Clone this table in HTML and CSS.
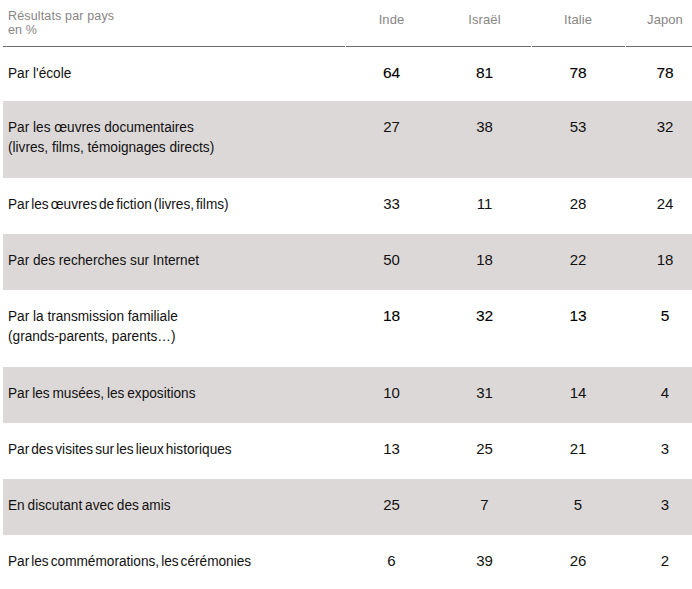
FILE: index.html
```html
<!DOCTYPE html>
<html lang="fr">
<head>
<meta charset="utf-8">
<title>Résultats par pays</title>
<link rel="stylesheet" href="styles.css">
</head>
<body>
<div class="table">
  <div class="row head">
    <div class="cell label hcap">Résultats par pays<br>en %</div>
    <div class="cell num hcol gap">Inde</div>
    <div class="cell num hcol">Israël</div>
    <div class="cell num hcol gap">Italie</div>
    <div class="cell num hcol gap">Japon</div>
  </div>
  <div class="row r1">
    <div class="cell label"><span class="t">Par l'école</span></div>
    <div class="cell num strong">64</div>
    <div class="cell num strong">81</div>
    <div class="cell num strong">78</div>
    <div class="cell num strong">78</div>
  </div>
  <div class="row shade double">
    <div class="cell label"><span class="t">Par les œuvres documentaires<br>(livres, films, témoignages directs)</span></div>
    <div class="cell num">27</div>
    <div class="cell num">38</div>
    <div class="cell num">53</div>
    <div class="cell num">32</div>
  </div>
  <div class="row">
    <div class="cell label tight"><span class="t">Par les œuvres de fiction (livres, films)</span></div>
    <div class="cell num">33</div>
    <div class="cell num">11</div>
    <div class="cell num">28</div>
    <div class="cell num">24</div>
  </div>
  <div class="row shade">
    <div class="cell label"><span class="t">Par des recherches sur Internet</span></div>
    <div class="cell num">50</div>
    <div class="cell num">18</div>
    <div class="cell num">22</div>
    <div class="cell num">18</div>
  </div>
  <div class="row double">
    <div class="cell label"><span class="t">Par la transmission familiale<br>(grands-parents, parents…)</span></div>
    <div class="cell num strong">18</div>
    <div class="cell num strong">32</div>
    <div class="cell num strong">13</div>
    <div class="cell num strong">5</div>
  </div>
  <div class="row shade">
    <div class="cell label semi"><span class="t">Par les musées, les expositions</span></div>
    <div class="cell num">10</div>
    <div class="cell num">31</div>
    <div class="cell num">14</div>
    <div class="cell num">4</div>
  </div>
  <div class="row">
    <div class="cell label tight"><span class="t">Par des visites sur les lieux historiques</span></div>
    <div class="cell num">13</div>
    <div class="cell num">25</div>
    <div class="cell num">21</div>
    <div class="cell num">3</div>
  </div>
  <div class="row shade">
    <div class="cell label semi"><span class="t">En discutant avec des amis</span></div>
    <div class="cell num">25</div>
    <div class="cell num">7</div>
    <div class="cell num">5</div>
    <div class="cell num">3</div>
  </div>
  <div class="row">
    <div class="cell label tight"><span class="t">Par les commémorations, les cérémonies</span></div>
    <div class="cell num">6</div>
    <div class="cell num">39</div>
    <div class="cell num">26</div>
    <div class="cell num">2</div>
  </div>
</div>
</body>
</html>
```

FILE: styles.css
```css
html, body {
  margin: 0;
  padding: 0;
  background: #ffffff;
  overflow: hidden;
}

body {
  font-family: "Liberation Sans", Arial, sans-serif;
  color: #111111;
}

.table {
  margin-left: 3px;
  width: 702px;
  display: flex;
  flex-direction: column;
}

.row {
  display: grid;
  grid-template-columns: 342px 93px 93px 94px 80px;
  min-height: 56px;
}

.row.r1 {
  min-height: 54px;
}

.row.double {
  min-height: 77px;
}

.row.shade {
  background: #dcd8d7;
}

.cell {
  padding-top: 16px;
  font-size: 15px;
  line-height: 20px;
}

.label {
  padding-left: 5px;
  font-size: 15.5px;
}

.label .t {
  display: inline-block;
  white-space: nowrap;
  transform: scaleX(0.88);
  transform-origin: 0 0;
}

.label.tight .t {
  word-spacing: -2px;
}

.label.semi .t {
  word-spacing: -1px;
}

.num {
  text-align: center;
  font-size: 15px;
}

.num.strong {
  color: #000000;
  font-size: 15.5px;
  -webkit-text-stroke: 0.1px #000000;
}

.head {
  min-height: 47px;
  color: #888585;
}

.head .cell {
  background: linear-gradient(#6f6c6c, #6f6c6c) 0 100% / 100% 1px no-repeat;
}

.head .cell.gap {
  background: linear-gradient(#6f6c6c, #6f6c6c) 1px 100% / calc(100% - 1px) 1px no-repeat;
}

.hcap {
  padding-top: 9px;
  font-size: 12.5px;
  line-height: 14px;
  letter-spacing: 0.15px;
}

.hcol {
  padding-top: 13px;
  font-size: 13px;
  line-height: 14px;
  letter-spacing: 0.1px;
}
```
